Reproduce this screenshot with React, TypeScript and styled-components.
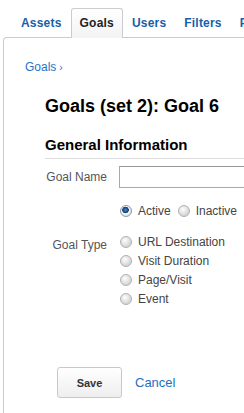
import styled, { createGlobalStyle } from "styled-components";

const GlobalStyle = createGlobalStyle`
	body {
		margin: 0;
		background: #ffffff;
		font-family: "Liberation Sans", Arial, sans-serif;
	}
`;

const Page = styled.div`
	width: 244px;
	height: 413px;
	overflow: hidden;
	display: flex;
	flex-direction: column;
`;

const TabBar = styled.div`
	display: flex;
	padding: 8px 0 0 12px;
	margin-bottom: -1px;
	white-space: nowrap;
	position: relative;
	z-index: 1;
`;

const Tab = styled.div<{ $active?: boolean }>`
	height: 29px;
	line-height: 29px;
	padding: 0 8px;
	border: 1px solid ${(p) => (p.$active ? "#cccccc" : "transparent")};
	border-bottom: none;
	border-radius: 3px 3px 0 0;
	font-size: 12px;
	letter-spacing: 0.2px;
	font-weight: bold;
	color: ${(p) => (p.$active ? "#222222" : "#1a5ea8")};
	background: ${(p) =>
		p.$active ? "linear-gradient(#ffffff, #f3f3f3)" : "transparent"};
	cursor: pointer;
`;

const Panel = styled.div`
	flex: 1;
	margin-left: 3px;
	border-left: 1px solid #cccccc;
	border-top: 1px solid #cccccc;
	border-top-left-radius: 4px;
	padding: 22px 0 0 21px;
`;

const Breadcrumb = styled.a`
	display: block;
	font-size: 12px;
	line-height: 14px;
	color: #2574c4;
	text-decoration: none;

	span {
		font-size: 10px;
		margin-left: 3px;
	}
`;

const Body = styled.div`
	padding-left: 20px;
	margin-top: 20px;
`;

const Heading = styled.h1`
	margin: 0;
	font-size: 18px;
	line-height: 22px;
	font-weight: bold;
	color: #000000;
	white-space: nowrap;
`;

const SectionTitle = styled.h2`
	margin: 19px 0 0;
	width: 400px;
	padding-bottom: 4px;
	border-bottom: 1px solid #dddddd;
	font-size: 15px;
	line-height: 18px;
	font-weight: bold;
	color: #000000;
`;

const Form = styled.div`
	margin-top: 7px;
`;

const FieldRow = styled.div<{ $gap?: number }>`
	display: flex;
	align-items: flex-start;
	margin-top: ${(p) => p.$gap ?? 0}px;
`;

const Label = styled.div<{ $lh?: number; $top?: number }>`
	width: 62px;
	flex-shrink: 0;
	margin-right: 12px;
	text-align: right;
	font-size: 12px;
	line-height: ${(p) => p.$lh ?? 16}px;
	padding-top: ${(p) => p.$top ?? 0}px;
	color: #555555;
	white-space: nowrap;
`;

const TextInput = styled.input`
	flex-shrink: 0;
	width: 200px;
	height: 22px;
	box-sizing: border-box;
	margin: 0;
	border: 1px solid #a9a9a9;
	border-top-color: #999999;
	padding: 2px 4px;
	font: 12px "Liberation Sans", Arial, sans-serif;
	outline: none;
`;

const Options = styled.div<{ $column?: boolean }>`
	display: flex;
	flex-direction: ${(p) => (p.$column ? "column" : "row")};
	white-space: nowrap;
`;

const Option = styled.label<{ $h?: number }>`
	display: inline-flex;
	align-items: center;
	height: ${(p) => p.$h ?? 16}px;
	margin-right: 6px;
	font-size: 12px;
	color: #444444;
	cursor: pointer;
`;

const Radio = styled.span<{ $checked?: boolean }>`
	width: 12px;
	height: 12px;
	box-sizing: border-box;
	margin: 0 6px 0 1px;
	border-radius: 50%;
	border: 1px solid ${(p) => (p.$checked ? "#8a9aab" : "#b0b0b0")};
	background: ${(p) =>
		p.$checked
			? "radial-gradient(circle at 45% 40%, #4f8fd0 0, #1c5590 2px, #143e6a 3px, #ffffff 3.6px, #e4e4e4 5px)"
			: "radial-gradient(circle at 40% 35%, #ffffff 0, #f0f0f0 2px, #d6d6d6 6px)"};
	flex-shrink: 0;
`;

const Buttons = styled.div`
	display: flex;
	align-items: center;
	gap: 13px;
	margin-top: 59px;
	padding-left: 32px;
`;

const SaveButton = styled.button`
	width: 65px;
	height: 31px;
	box-sizing: border-box;
	border: 1px solid #c8c8c8;
	border-radius: 3px;
	background: linear-gradient(#ffffff, #eeeeee);
	font: bold 11px "Liberation Sans", Arial, sans-serif;
	color: #333333;
	cursor: pointer;
`;

const CancelLink = styled.a`
	font-size: 13px;
	color: #1f6fc2;
	text-decoration: none;
	cursor: pointer;
`;

const tabs = ["Assets", "Goals", "Users", "Filters", "Profile Settings"];
const goalTypes = ["URL Destination", "Visit Duration", "Page/Visit", "Event"];

export default function App() {
	return (
		<Page>
			<GlobalStyle />
			<TabBar>
				{tabs.map((t) => (
					<Tab key={t} $active={t === "Goals"}>
						{t}
					</Tab>
				))}
			</TabBar>
			<Panel>
				<Breadcrumb>
					Goals<span>›</span>
				</Breadcrumb>
				<Body>
					<Heading>Goals (set 2): Goal 6</Heading>
					<SectionTitle>General Information</SectionTitle>
					<Form>
						<FieldRow>
							<Label $lh={22}>Goal Name</Label>
							<TextInput type="text" />
						</FieldRow>
						<FieldRow $gap={15}>
							<Label />
							<Options>
								<Option>
									<Radio $checked />
									Active
								</Option>
								<Option>
									<Radio />
									Inactive
								</Option>
							</Options>
						</FieldRow>
						<FieldRow $gap={13}>
							<Label $lh={19} $top={4}>
								Goal Type
							</Label>
							<Options $column>
								{goalTypes.map((g) => (
									<Option key={g} $h={19}>
										<Radio />
										{g}
									</Option>
								))}
							</Options>
						</FieldRow>
					</Form>
				</Body>
				<Buttons>
					<SaveButton>Save</SaveButton>
					<CancelLink>Cancel</CancelLink>
				</Buttons>
			</Panel>
		</Page>
	);
}
